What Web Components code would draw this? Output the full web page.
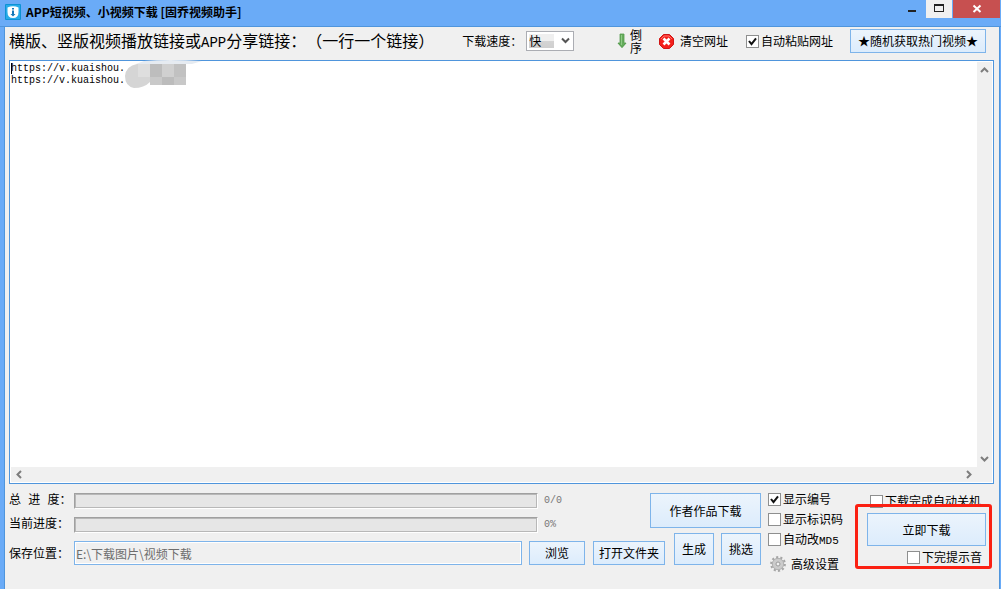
<!DOCTYPE html>
<html lang="zh-CN">
<head>
<meta charset="utf-8">
<title>APP短视频、小视频下载 [固乔视频助手]</title>
<style>
  html, body { margin: 0; height: 100%; }
  body {
    font: 12px/16px "Noto Sans CJK SC", "Liberation Sans", sans-serif;
    text-spacing-trim: space-all;
    color: #000;
    overflow: hidden;
    --sky: #6aabf7;
    --edge: #4f95dc;
    --face: #f0f0f0;
  }
</style>
</head>
<body>
<app-window></app-window>

<script>
const define = (name, html, setup) => {
  const template = document.createElement('template');
  template.innerHTML = html;
  customElements.define(name, class extends HTMLElement {
    constructor() {
      super();
      this.attachShadow({ mode: 'open' }).append(template.content.cloneNode(true));
    }
    connectedCallback() { if (setup) setup(this, this.shadowRoot); }
  });
};

/* Push button */
define('push-button', `
<style>
  :host { display: block; height: 24px; }
  button {
    box-sizing: border-box; width: 100%; height: 100%; margin: 0; padding: 0;
    border: 1px solid #7eb4ea; background: linear-gradient(#ecf4fc, #dcecfc);
    font: inherit; color: inherit; white-space: nowrap;
  }
</style>
<button type="button"><slot></slot></button>`);

/* Tick box with label */
define('tick-box', `
<style>
  :host { display: block; }
  label { display: flex; align-items: center; gap: 2px; white-space: nowrap; }
  input {
    appearance: none; flex: none; box-sizing: border-box; width: 13px; height: 13px; margin: 0;
    border: 1px solid #8e8f8f; background: #fff;
  }
  input:checked {
    background: #fff url("data:image/svg+xml,%3Csvg xmlns='http://www.w3.org/2000/svg' viewBox='0 0 11 11'%3E%3Cpath d='M2 5l2.5 3.2L9 2.3' fill='none' stroke='%23111' stroke-width='2'/%3E%3C/svg%3E") center / 11px 11px;
  }
</style>
<label><input type="checkbox"><span><slot></slot></span></label>`,
(host, root) => { root.querySelector('input').checked = host.hasAttribute('checked'); });

/* Flat button with a leading icon */
define('icon-button', `
<style>
  :host { display: block; }
  button {
    display: flex; align-items: center; gap: var(--gap, 6px); margin: 0; padding: 0; border: 0;
    background: none; font: inherit; color: inherit; white-space: nowrap; text-align: left;
  }
  ::slotted(svg) { display: block; flex: none; }
</style>
<button type="button"><slot name="icon"></slot><span><slot></slot></span></button>`);

/* Title bar */
define('title-bar', `
<style>
  :host { display: flex; height: 26px; background: var(--sky); border-bottom: 1px solid var(--edge); }
  .logo { width: 16px; height: 16px; margin: 4px 5px 0; }
  h1 { flex: 1; margin: 0; font-size: 12px; line-height: 24px; font-weight: bold; white-space: nowrap; }
  button { display: grid; place-items: center; height: 18px; margin: 0; padding: 0; border: 0; background: none; }
  .min { width: 26px; }
  .max { width: 26px; margin-right: 1px; background: #f0f0f0; }
  .close { width: 47px; background: #c75050; margin-right: 1px; }
</style>
<svg class="logo" viewBox="0 0 16 16"><rect width="16" height="16" rx="1" fill="#0d92d4"/><rect x="1" y="1" width="14" height="14" fill="#27abe8"/><path d="M2.500 3.500Q8 1 13.500 3.500V8Q13.500 14 8 14Q2.500 14 2.500 8Z" fill="#fff"/><path d="M7 4h2v1.500H7zM7 6.500h2v3.500h1.500L8 12.500 5.500 10H7z" fill="#1678b8"/></svg>
<h1><slot></slot></h1>
<button class="min" type="button" aria-label="最小化"><svg width="26" height="18"><path d="M8 11h8" stroke="#222" stroke-width="2"/></svg></button>
<button class="max" type="button" aria-label="最大化"><svg width="26" height="18"><path d="M8 4h10v8H8z" fill="#222"/><path d="M9 6h8v5H9z" fill="#f0f0f0"/></svg></button>
<button class="close" type="button" aria-label="关闭"><svg width="47" height="18"><path d="M20.500 5.500l7 6.500M27.500 5.500l-7 6.500" stroke="#fff" stroke-width="2"/></svg></button>`);

/* Download speed picker */
define('speed-picker', `
<style>
  :host { display: flex; align-items: center; gap: 4px; white-space: nowrap; }
  .box { display: grid; width: 48px; height: 20px; }
  select, svg { grid-area: 1 / 1; }
  select {
    appearance: none; box-sizing: border-box; width: 100%; height: 100%; margin: 0; padding: 0 0 0 2px;
    border: 1px solid #abadb3; border-radius: 0; color: inherit; font: inherit; line-height: 16px;
    background: linear-gradient(#efefef 50%, #d4d4d4 50%, #cfcfcf) 2px 2px / 25px 14px no-repeat #fff;
  }
  svg { justify-self: end; align-self: center; margin-right: 4px; pointer-events: none; }
</style>
<label for="speed">下载速度：</label>
<div class="box">
  <select id="speed"><option>快</option><option>中</option><option>慢</option></select>
  <svg width="9" height="8"><path d="M1 1.500l3.500 3.500L8 1.500" fill="none" stroke="#555" stroke-width="2"/></svg>
</div>`);

/* Top tool bar */
define('tool-bar', `
<style>
  :host { display: flex; align-items: center; height: 28px; padding: 0 13px 0 4px; white-space: nowrap; }
  h2 { margin: 0 28px 0 0; font-size: 16px; line-height: 24px; font-weight: normal; }
  h2 span { font-family: "Liberation Mono", monospace; font-size: 14px; }
  .order { --gap: 3px; margin-left: auto; line-height: 13px; }
  .clear { margin: 0 18px 0 17px; }
  .hot { width: 136px; margin-left: 17px; }
</style>
<h2>横版、竖版视频播放链接或<span>APP</span>分享链接：（一行一个链接）</h2>
<speed-picker></speed-picker>
<icon-button class="order">
  <svg slot="icon" width="10" height="16" viewBox="0 0 10 16"><path d="M3 1h4v9h2.500L5 15 .5 10H3z" fill="#65ad5c"/><path d="M3 1h4v9h2L5 14.500 1 10h2z" fill="none" stroke="#559a4e" stroke-width=".8"/><path d="M4 2h1v10H4z" fill="#8fca86"/></svg>倒<br>序
</icon-button>
<icon-button class="clear">
  <svg slot="icon" width="15" height="15" viewBox="0 0 15 15"><path d="M4.500.5h6l4 4v6l-4 4h-6l-4-4v-6z" fill="#f3201b" stroke="#cf1515"/><path d="M2 5l3-3h5l3 3" fill="none" stroke="#ff716a"/><path d="M4.500 4.500l6 6M10.500 4.500l-6 6" stroke="#fff" stroke-width="2.600"/></svg>清空网址
</icon-button>
<tick-box checked>自动粘贴网址</tick-box>
<push-button class="hot">★随机获取热门视频★</push-button>`);

/* Address list with its scroll bars */
define('link-editor', `
<style>
  :host {
    position: relative; display: grid; grid-template: minmax(0, 1fr) 15px / minmax(0, 1fr) 15px;
    margin: 0 5px 0 4px; padding: 1px; background: #fff; border: 1px solid var(--edge);
  }
  textarea {
    box-sizing: border-box; width: 100%; height: 100%; margin: 0; padding: 1px 0 0; border: 0; resize: none; outline: 0;
    overflow: hidden; background: #fff; color: #000; white-space: pre;
    font: 10px/12px "Liberation Mono", monospace;
  }
  .v, .h { display: flex; justify-content: space-between; align-items: center; background: var(--face); }
  .v { flex-direction: column; padding: 4px 0; box-sizing: border-box; }
  .h { padding: 0 4px; }
  .corner { background: var(--face); }
  .mosaic { position: absolute; left: 112px; top: -1px; pointer-events: none; }
  .caret { position: absolute; left: 1px; top: 2px; width: 1px; height: 11px; background: #000; }
  path.c { fill: none; stroke: #7d7d7d; stroke-width: 2; }
</style>
<textarea aria-label="视频链接" spellcheck="false">https://v.kuaishou.
https://v.kuaishou.</textarea>
<div class="v">
  <svg width="9" height="8"><path class="c" d="M1 6l3.500-3.500L8 6"/></svg>
  <svg width="9" height="8"><path class="c" d="M1 2l3.500 3.500L8 2"/></svg>
</div>
<div class="h">
  <svg width="8" height="9"><path class="c" d="M6 1L2.500 4.500 6 8"/></svg>
  <svg width="8" height="9"><path class="c" d="M2 1l3.500 3.500L2 8"/></svg>
</div>
<div class="corner"></div>
<div class="caret"></div>
<svg class="mosaic" width="84" height="30" aria-hidden="true">
  <path d="M22 1Q46-1 80 1L70 4H14z" fill="#e6ebf1"/>
  <path d="M15 4h30v18H28Q22 28 12 28 3 26 3 16 4 6 15 4z" fill="#d5d5d5"/>
  <path d="M16 4h12v13H16z" fill="#dedede"/>
  <path d="M28 4h12v13H28z" fill="#bdbdbd"/><path d="M40 4h12v13H40z" fill="#d0d0d0"/><path d="M52 4h12v13H52z" fill="#c1c1c1"/>
  <path d="M28 17h12v8H28z" fill="#c9c9c9"/><path d="M40 17h12v8H40z" fill="#bcbcbc"/><path d="M52 17h12v8H52z" fill="#c8c8c8"/>
</svg>`);

/* Labelled progress trough */
define('progress-row', `
<style>
  :host { display: flex; align-items: center; height: 16px; white-space: nowrap; }
  label { flex: none; width: 65px; white-space: pre; font-family: "Liberation Mono", "Noto Sans CJK SC", monospace; }
  .bar {
    flex: 1; box-sizing: border-box; height: 16px; border: 1px solid #a0a0a0; border-right-color: #fff; border-bottom-color: #fff;
    background: #e6e6e6; box-shadow: inset 1px 1px #b8b8b8, inset -1px -1px #b8b8b8;
  }
  .bar i { display: block; height: 100%; width: 0; }
  output { width: 106px; padding-left: 6px; font: 10px/16px "Liberation Mono", monospace; color: #777; }
</style>
<label for="value"></label>
<div class="bar"><i></i></div>
<output id="value"></output>`,
(host, root) => {
  root.querySelector('label').textContent = host.getAttribute('label');
  root.querySelector('output').textContent = host.getAttribute('value');
});

/* Bottom control panel */
define('control-panel', `
<style>
  :host { display: flex; align-items: flex-start; box-sizing: border-box; height: 105px; padding: 5px 7px 0 4px; }
  .main { flex: 1; padding-top: 4px; }
  .top { display: flex; align-items: flex-start; }
  .bars { flex: 1; display: grid; gap: 8px; }
  .author { width: 111px; height: 35px; }
  .path { display: flex; align-items: flex-end; }
  .path label { flex: none; width: 65px; line-height: 24px; white-space: nowrap; }
  .path input {
    flex: 1; min-width: 0; box-sizing: border-box; height: 24px; margin: 0; padding: 0 1px; outline: 0;
    border: 1px solid #7eb4ea; background: var(--face); box-shadow: inset 0 0 0 1px #fff;
    color: #6d6d6d; font: inherit;
  }
  .browse { width: 56px; margin-left: 7px; }
  .open { width: 72px; margin: 0 9px 0 8px; }
  .small { width: 40px; height: 32px; }
  .small + .small { margin-left: 7px; }
  .options { display: grid; grid-auto-rows: 20px; align-items: center; width: 87px; margin-left: 7px; }
  .options span { font: 11px/12px "Liberation Mono", monospace; }
  .more { --gap: 5px; padding: 10px 0 0 2px; }
  .start { position: relative; flex: none; width: 137px; box-sizing: border-box; padding: 4px 6px 0 12px; }
  .start .off { padding: 0 0 4px 3px; }
  .start .go { height: 33px; }
  .start .beep { padding: 3px 0 0 40px; }
  .ring { position: absolute; left: 0; top: 15px; right: 0; height: 59px; border: 3px solid #fb2012; border-radius: 3px; pointer-events: none; }
</style>
<div class="main">
  <div class="top">
    <div class="bars">
      <progress-row label="总 进 度：" value="0/0"></progress-row>
      <progress-row label="当前进度：" value="0%"></progress-row>
    </div>
    <push-button class="author">作者作品下载</push-button>
  </div>
  <div class="path">
    <label for="folder">保存位置：</label>
    <input id="folder" type="text" readonly value="E:\\下载图片\\视频下载">
    <push-button class="browse">浏览</push-button>
    <push-button class="open">打开文件夹</push-button>
    <push-button class="small">生成</push-button>
    <push-button class="small">挑选</push-button>
  </div>
</div>
<div class="options">
  <tick-box checked>显示编号</tick-box>
  <tick-box>显示标识码</tick-box>
  <tick-box>自动改<span>MD5</span></tick-box>
  <icon-button class="more">
    <svg slot="icon" width="16" height="16" viewBox="0 0 16 16"><g fill="none"><circle cx="8" cy="8" r="6.800" stroke="#a6a6a6" stroke-width="2.200" stroke-dasharray="2.136 2.136"/><circle cx="8" cy="8" r="4" stroke="#cbcbcb" stroke-width="4"/><circle cx="8" cy="8" r="5.700" stroke="#a2a2a2" stroke-width=".7"/><circle cx="8" cy="8" r="2" fill="#f0f0f0" stroke="#999"/></g></svg>高级设置
  </icon-button>
</div>
<div class="start">
  <tick-box class="off">下载完成自动关机</tick-box>
  <push-button class="go">立即下载</push-button>
  <tick-box class="beep">下完提示音</tick-box>
  <div class="ring"></div>
</div>`);

/* Whole window */
define('app-window', `
<style>
  :host { display: flex; flex-direction: column; height: 100vh; background: var(--sky); }
  .client {
    flex: 1; min-height: 0; display: flex; flex-direction: column; margin: 0 1px 0 4px;
    border: 1px solid var(--edge); border-width: 0 1px; background: var(--face);
  }
  tool-bar { margin-bottom: 5px; }
  link-editor { flex: 1; min-height: 0; }
</style>
<title-bar>APP短视频、小视频下载 [固乔视频助手]</title-bar>
<div class="client">
  <tool-bar></tool-bar>
  <link-editor></link-editor>
  <control-panel></control-panel>
</div>`);
</script>
</body>
</html>
